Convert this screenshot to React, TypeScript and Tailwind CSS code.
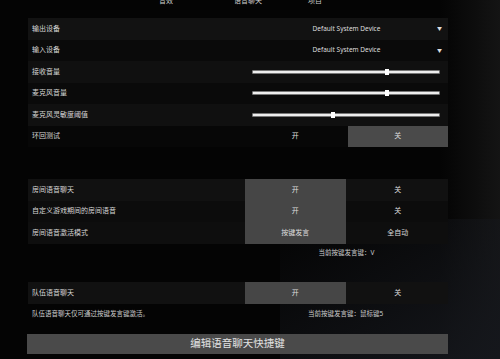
import React from "react";

const font = { fontFamily: '"Noto Sans", "Noto Sans CJK SC", sans-serif' };

function Slider({ pct }: { pct: number }) {
  return (
    <div className="relative h-[4px] w-full rounded-[1px] border border-[#777] bg-[#eee]">
      <div
        className="absolute top-1/2 h-[6px] w-[4px] -translate-x-1/2 -translate-y-1/2 bg-white"
        style={{ left: `${pct}%` }}
      />
    </div>
  );
}

function Row({ label, bg, children }: { label: string; bg: string; children?: React.ReactNode }) {
  return (
    <div className={`flex h-[21.5px] items-center ${bg}`}>
      <div className="w-[217px] pl-[4px] text-[7px] text-[#d4d4d4]">{label}</div>
      <div className="flex h-full flex-1 items-center">{children}</div>
    </div>
  );
}

function Toggle({ a, b, sel }: { a: string; b: string; sel: 0 | 1 }) {
  return (
    <div className="flex h-full w-full">
      <div
        className={`flex flex-1 items-center justify-center text-[7px] text-[#ddd] ${
          sel === 0 ? "bg-[#464646]" : ""
        }`}
      >
        {a}
      </div>
      <div className="w-[2px]" />
      <div
        className={`flex flex-1 items-center justify-center text-[7px] text-[#ddd] ${
          sel === 1 ? "bg-[#4a4a4a]" : ""
        }`}
      >
        {b}
      </div>
    </div>
  );
}

function Dropdown() {
  return (
    <div className="relative flex h-full w-full items-center justify-center text-[6.5px] text-[#ddd]">
      Default System Device
      <span className="absolute right-[6px] text-[5px]">▼</span>
    </div>
  );
}

export default function App() {
  return (
    <div
      className="relative h-[359px] w-[500px] overflow-hidden bg-[#040404]"
      style={font}
    >
      <div className="absolute right-0 top-0 h-full w-[60px] bg-gradient-to-l from-[#141414] to-transparent" />
      <div className="absolute bottom-0 right-0 h-[140px] w-[220px] bg-gradient-to-tl from-[#15171c] to-transparent" />
      <div className="relative">
        <div className="flex h-[18px] items-start text-[7px] text-[#cfcfcf]">
          <div className="-mt-[4px] flex w-full">
            <span className="ml-[159px]">音效</span>
            <span className="ml-[61px]">语音聊天</span>
            <span className="ml-[46px]">项目</span>
          </div>
        </div>
        <div className="ml-[28px] w-[420px]">
          <Row label="输出设备" bg="bg-[#121212]">
            <Dropdown />
          </Row>
          <Row label="输入设备" bg="bg-[#0a0a0a]">
            <Dropdown />
          </Row>
          <Row label="接收音量" bg="bg-[#101010]">
            <div className="w-full pl-[7px] pr-[8px]">
              <Slider pct={72} />
            </div>
          </Row>
          <Row label="麦克风音量" bg="bg-[#0a0a0a]">
            <div className="w-full pl-[7px] pr-[8px]">
              <Slider pct={72} />
            </div>
          </Row>
          <Row label="麦克风灵敏度阈值" bg="bg-[#101010]">
            <div className="w-full pl-[7px] pr-[8px]">
              <Slider pct={43} />
            </div>
          </Row>
          <Row label="环回测试" bg="bg-[#070707]">
            <Toggle a="开" b="关" sel={1} />
          </Row>
          <div className="h-[32px]" />
          <div className="bg-[#0e0e0e]">
            <Row label="房间语音聊天" bg="bg-[#111111]">
              <Toggle a="开" b="关" sel={0} />
            </Row>
            <Row label="自定义游戏期间的房间语音" bg="bg-[#0c0c0c]">
              <Toggle a="开" b="关" sel={0} />
            </Row>
            <Row label="房间语音激活模式" bg="bg-[#0e0e0e]">
              <Toggle a="按键发言" b="全自动" sel={0} />
            </Row>
          </div>
          <div className="flex h-[18px] items-center">
            <div className="w-[217px]" />
            <div className="flex-1 text-center text-[6.5px] text-[#ccc]">当前按键发言键：V</div>
          </div>
          <div className="h-[20.5px]" />
          <Row label="队伍语音聊天" bg="bg-[#111111]">
            <Toggle a="开" b="关" sel={0} />
          </Row>
          <div className="flex h-[20px] items-center text-[6.5px] text-[#ccc]">
            <div className="w-[280px] pl-[4px]">队伍语音聊天仅可通过按键发言键激活。</div>
            <div>当前按键发言键：鼠标键5</div>
          </div>
          <div className="h-[10px]" />
          <div className="-ml-[1px] flex h-[20px] items-center justify-center bg-[#4a4a4a] text-[10.5px] text-[#e2e2e2]">
            编辑语音聊天快捷键
          </div>
        </div>
      </div>
    </div>
  );
}
